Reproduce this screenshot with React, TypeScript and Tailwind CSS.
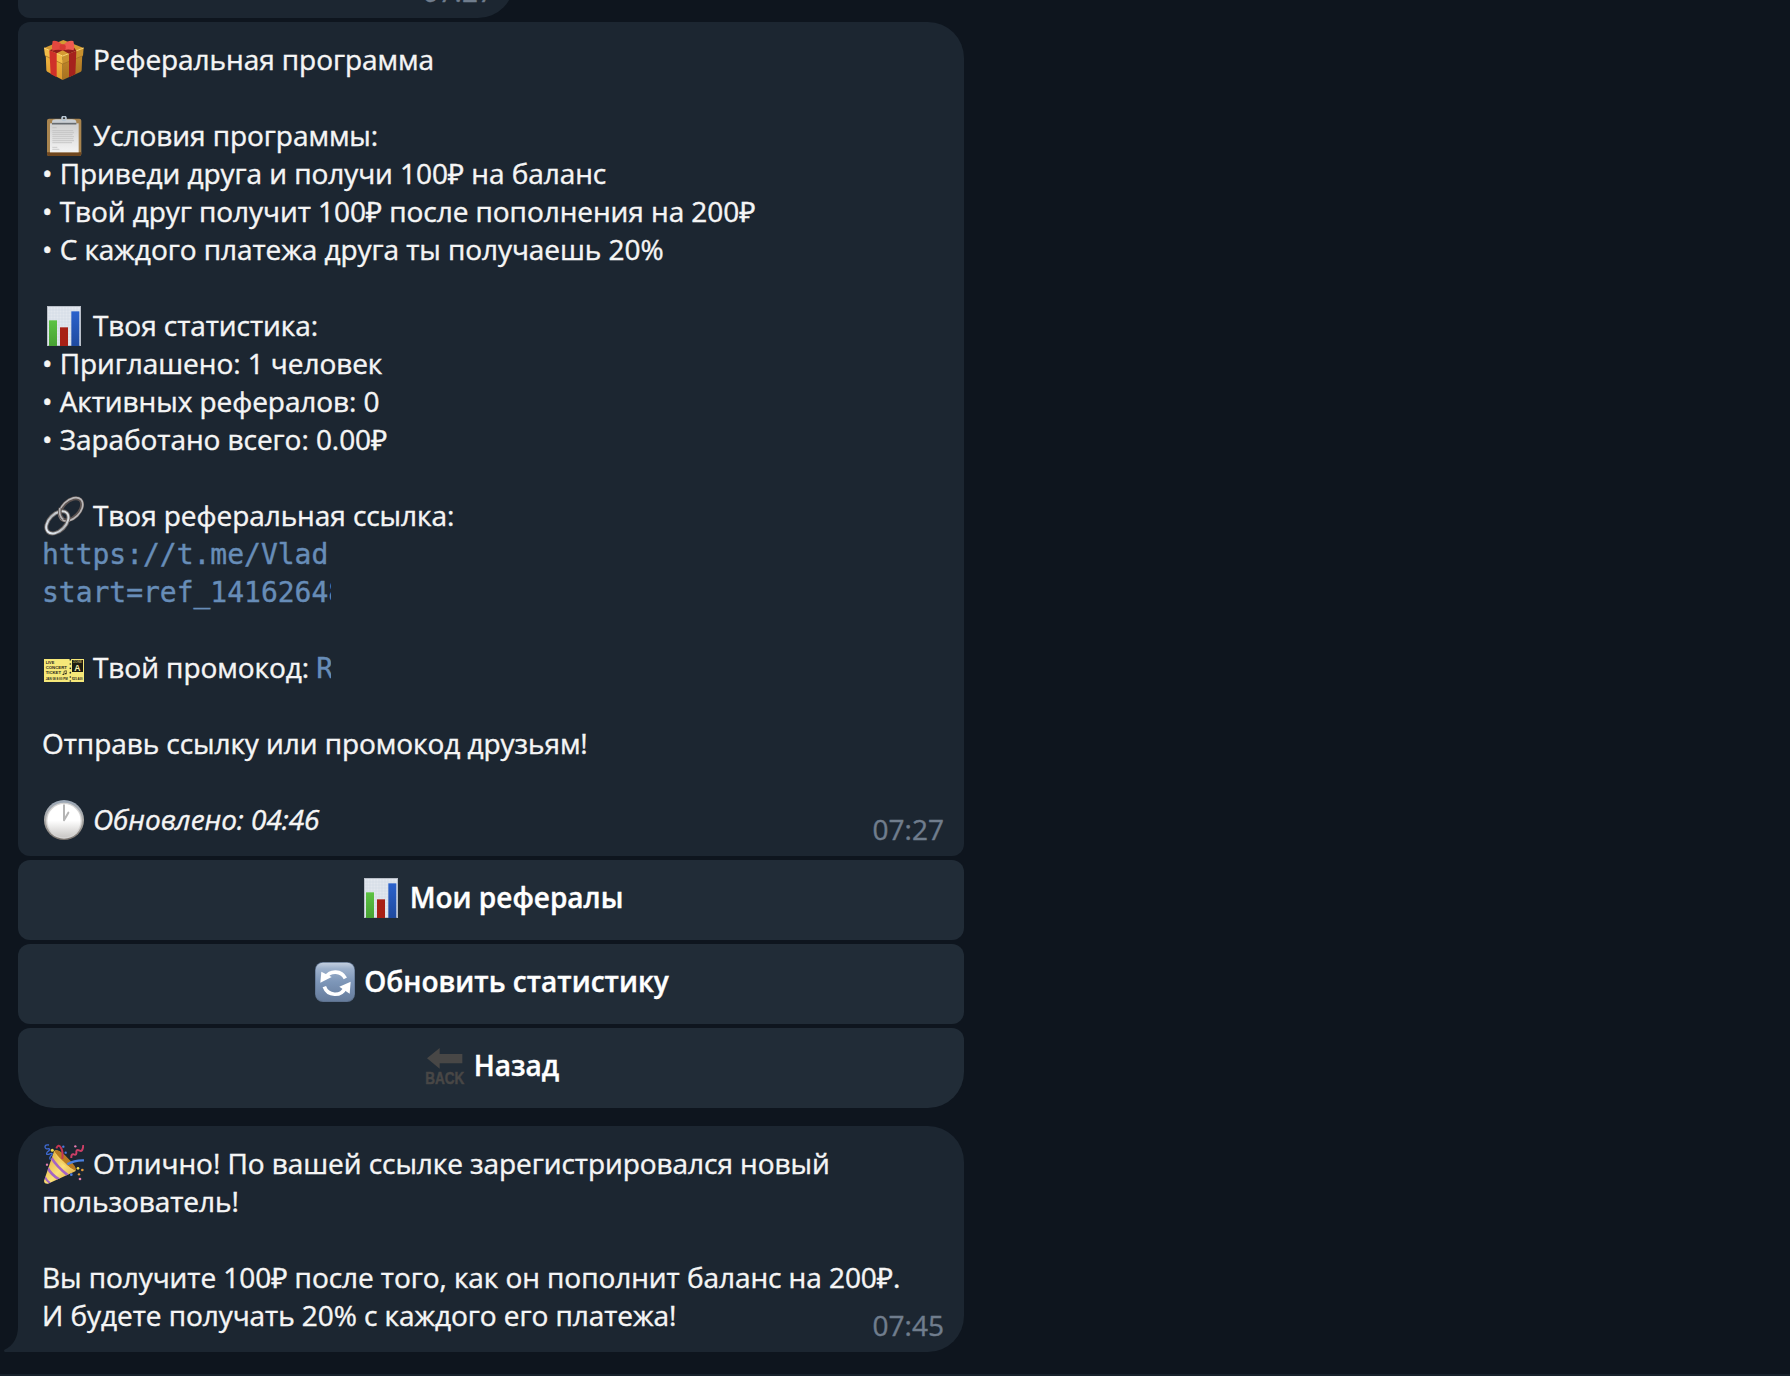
import type { ReactNode } from "react";

function Emoji({ children }: { children: ReactNode }) {
  return (
    <svg viewBox="0 0 120 120" className="ml-0.5 mr-[9px] h-10 w-10 shrink-0 overflow-hidden [-webkit-text-stroke:0px]">
      {children}
    </svg>
  );
}

function Gift() {
  return (
    <Emoji>
      <defs>
        <linearGradient id="giftLeft" x1="0" y1="0" x2="0" y2="1">
          <stop offset="0" stopColor="#f0b844" />
          <stop offset="1" stopColor="#dd9a2b" />
        </linearGradient>
        <linearGradient id="giftRight" x1="0" y1="0" x2="0" y2="1">
          <stop offset="0" stopColor="#c38a2c" />
          <stop offset="1" stopColor="#a8721f" />
        </linearGradient>
      </defs>
      <path d="M5 38 L56 60 V120 L10 95 Q7 93 7 90 Z" fill="url(#giftLeft)" />
      <path d="M56 60 L115 38 L113 90 Q113 94 109 96 L56 120 Z" fill="url(#giftRight)" />
      <path d="M0 24 L58 0 L119 24 L56 48 Z" fill="#d49a33" />
      <path d="M0 24 L56 48 V72 L3 47 Z" fill="#f2bc48" />
      <path d="M56 48 L119 24 L117 47 L56 72 Z" fill="#c8912f" />
      <path d="M3 47 L56 72 L117 47" fill="none" stroke="#9b6b20" strokeWidth="2" />
      <path d="M0 24 L56 48 L119 24" fill="none" stroke="#ffd873" strokeWidth="3" />
      <path d="M16 31 L38 40 V112 L20 102 Z" fill="#cf3029" />
      <path d="M75 41 L97 32 L94 103 L75 112 Z" fill="#a5221d" />
      <path d="M16 31 L80 8 L97 32 L75 41 L56 31 L38 40 Z" fill="#8f1d1b" />
      <path d="M26 3 Q40 0 55 15 L53 30 Q38 28 25 32 Q22 18 26 3Z" fill="#e2473f" />
      <path d="M88 3 Q72 -1 58 15 L61 30 Q74 27 89 31 Q92 16 88 3Z" fill="#ef5a50" />
      <rect x="47" y="13" width="18" height="18" rx="6" fill="#d63932" />
    </Emoji>
  );
}

function Clipboard() {
  return (
    <Emoji>
      <defs>
        <linearGradient id="paper" x1="0" y1="0" x2="0" y2="1">
          <stop offset="0" stopColor="#cfcfcf" />
          <stop offset="1" stopColor="#f4f4f4" />
        </linearGradient>
      </defs>
      <rect x="9" y="8" width="103" height="112" rx="6" fill="#a8844f" />
      <path d="M9 109 H112 V114 Q112 120 106 120 H15 Q9 120 9 114Z" fill="#70471f" />
      <rect x="18" y="22" width="86" height="87" fill="url(#paper)" />
      <g stroke="#b9b9b9" strokeWidth="2">
        <path d="M25 35H38M25 44H88M25 50H90M25 56H86M25 62H90M25 68H88M25 74H90M25 80H84M25 94H40M25 100H46" />
      </g>
      <path d="M24 22 V17 Q25 10 36 10 H84 Q95 10 97 17 V22Z" fill="#c9ced3" />
      <path d="M24 23H97" stroke="#666b70" strokeWidth="5" />
      <circle cx="60" cy="7" r="6" fill="none" stroke="#b9c6d2" strokeWidth="5" />
    </Emoji>
  );
}

function Chart() {
  return (
    <Emoji>
      <defs>
        <linearGradient id="barGreen" x1="0" y1="0" x2="0" y2="1">
          <stop offset="0" stopColor="#5cc343" />
          <stop offset="1" stopColor="#48a134" />
        </linearGradient>
        <linearGradient id="barBlue" x1="0" y1="0" x2="0" y2="1">
          <stop offset="0" stopColor="#2b62cc" />
          <stop offset="1" stopColor="#1f4a9f" />
        </linearGradient>
      </defs>
      <rect x="9" y="0" width="102" height="120" fill="#e2e7ee" />
      <path
        d="M18 0V120M27 0V120M36 0V120M45 0V120M54 0V120M63 0V120M72 0V120M81 0V120M90 0V120M99 0V120M9 12H111M9 21H111M9 30H111M9 39H111M9 48H111M9 57H111M9 66H111M9 75H111M9 84H111M9 93H111M9 102H111M9 111H111"
        stroke="#ccd5e0"
        strokeWidth="1.5"
      />
      <rect x="10.500" y="1.500" width="99" height="117" fill="none" stroke="#b9bfc8" strokeWidth="3" />
      <rect x="15" y="43" width="24" height="77" fill="url(#barGreen)" />
      <rect x="48" y="64" width="24" height="56" fill="#a82015" />
      <rect x="82" y="16" width="24" height="104" fill="url(#barBlue)" />
    </Emoji>
  );
}

function Chain() {
  return (
    <Emoji>
      <defs>
        <linearGradient id="steel" x1="0" y1="0" x2="1" y2="0">
          <stop offset="0" stopColor="#e3ebf3" />
          <stop offset="0.5" stopColor="#b4babf" />
          <stop offset="1" stopColor="#dfe3e6" />
        </linearGradient>
      </defs>
      <g fill="none">
        <g transform="rotate(-45 81 40)">
          <ellipse cx="81" cy="40" rx="40" ry="25" stroke="#5b5250" strokeWidth="12" />
          <ellipse cx="81" cy="40" rx="42" ry="27" stroke="#b9b7b8" strokeWidth="5" />
        </g>
        <g transform="rotate(-45 40 79)">
          <ellipse cx="40" cy="79" rx="40" ry="25" stroke="#6b6462" strokeWidth="12" />
          <ellipse cx="40" cy="79" rx="40" ry="25" stroke="url(#steel)" strokeWidth="6" />
        </g>
        <path d="M49 36 Q43 58 58 70" stroke="#5b5250" strokeWidth="11" />
        <path d="M48 36 Q43 59 58 71" stroke="#b5b4b6" strokeWidth="5" />
      </g>
    </Emoji>
  );
}

function Ticket() {
  return (
    <Emoji>
      <rect x="0" y="33" width="120" height="69" fill="#f6e879" />
      <rect x="84" y="36" width="33" height="36" fill="#1d1b12" />
      <g fontFamily="Liberation Sans" fontWeight="700" fill="#28251a" letterSpacing="0">
        <text x="5" y="48" fontSize="12.500" textLength="26" lengthAdjust="spacingAndGlyphs">LIVE</text>
        <text x="5" y="63" fontSize="12.500" textLength="64" lengthAdjust="spacingAndGlyphs">CONCERT</text>
        <text x="5" y="79" fontSize="12.500" textLength="46" lengthAdjust="spacingAndGlyphs">TICKET</text>
        <text x="5" y="96" fontSize="8" textLength="66" lengthAdjust="spacingAndGlyphs">JAN 08  8:00 PM</text>
        <text x="84" y="96" fontSize="8" textLength="32" lengthAdjust="spacingAndGlyphs">$25 A00</text>
        <text x="100.500" y="69" fontSize="26" textAnchor="middle" fill="#fbf3b0">A</text>
        <text x="87" y="46" fontSize="9" textLength="27" lengthAdjust="spacingAndGlyphs" fill="#a99e54">ZONE</text>
      </g>
      <path d="M60 79 V70 L67 68 V77" fill="none" stroke="#28251a" strokeWidth="2" />
      <ellipse cx="58" cy="79" rx="3" ry="2" fill="#28251a" />
      <ellipse cx="65" cy="77" rx="3" ry="2" fill="#28251a" />
      <g fill="#1c2631">
        <circle cx="79" cy="35" r="2.500" />
        <circle cx="79" cy="48" r="2.500" />
        <circle cx="79" cy="61" r="2.500" />
        <circle cx="79" cy="74" r="2.500" />
        <circle cx="79" cy="87" r="2.500" />
        <circle cx="79" cy="99" r="2.500" />
      </g>
    </Emoji>
  );
}

function Clock() {
  return (
    <Emoji>
      <defs>
        <linearGradient id="clockRim" x1="0" y1="0" x2="0" y2="1">
          <stop offset="0" stopColor="#9aa7b6" />
          <stop offset="0.5" stopColor="#b0aeab" />
          <stop offset="1" stopColor="#77716c" />
        </linearGradient>
        <linearGradient id="clockFace" x1="0" y1="0" x2="0" y2="1">
          <stop offset="0.5" stopColor="#ffffff" />
          <stop offset="1" stopColor="#c9c7c5" />
        </linearGradient>
      </defs>
      <circle cx="60" cy="60" r="60" fill="url(#clockRim)" />
      <circle cx="60" cy="62" r="54" fill="#d4d3d2" />
      <circle cx="60" cy="62" r="50" fill="url(#clockFace)" />
      <path d="M60 16 V61 L73 38" fill="none" stroke="#b5b5b5" strokeWidth="6" strokeLinecap="round" strokeLinejoin="round" />
    </Emoji>
  );
}

function Refresh() {
  return (
    <Emoji>
      <defs>
        <linearGradient id="keyBlue" x1="0" y1="0" x2="0" y2="1">
          <stop offset="0" stopColor="#c3cfdf" />
          <stop offset="0.16" stopColor="#9cb0cb" />
          <stop offset="0.5" stopColor="#7d96b8" />
          <stop offset="1" stopColor="#667c9c" />
        </linearGradient>
      </defs>
      <rect width="120" height="120" rx="24" fill="#5e728e" />
      <rect x="2" y="2" width="116" height="115" rx="22" fill="url(#keyBlue)" />
      <g fill="none" stroke="#fff" strokeWidth="11">
        <path d="M32 46 A34 34 0 0 1 91 49" />
        <path d="M91 77 A34 34 0 0 1 28 74" />
      </g>
      <path d="M19 29 L50 45 L16 62 Z" fill="#fff" />
      <path d="M107 59 L104 95 L73 74 Z" fill="#fff" />
    </Emoji>
  );
}

function Back() {
  return (
    <Emoji>
      <path d="M6 37 L44 6 V24 H112 V52 H44 V68 Z" fill="#484746" />
      <text x="1" y="114" fontFamily="Liberation Sans" fontWeight="700" fontSize="52" textLength="117" lengthAdjust="spacingAndGlyphs" fill="#484746" stroke="#484746" strokeWidth="1.5">
        BACK
      </text>
    </Emoji>
  );
}

function Party() {
  return (
    <Emoji>
      <defs>
        <linearGradient id="cone" x1="0" y1="0.3" x2="0.8" y2="1">
          <stop offset="0" stopColor="#e0ab3a" />
          <stop offset="0.5" stopColor="#fbe07a" />
          <stop offset="1" stopColor="#d79a31" />
        </linearGradient>
        <clipPath id="coneShape">
          <path d="M30 22 L0 110 Q0 120 12 119 L94 82 Q99 74 80 56 L50 24 Q36 14 30 22Z" />
        </clipPath>
      </defs>
      <g clipPath="url(#coneShape)">
        <rect width="120" height="120" fill="url(#cone)" />
        <path d="M22 41 Q38 68 72 94" fill="none" stroke="#a464c4" strokeWidth="8" />
        <path d="M10 70 Q22 93 48 108" fill="none" stroke="#a464c4" strokeWidth="8" />
        <path d="M2 98 Q8 112 22 120" fill="none" stroke="#a464c4" strokeWidth="6" />
      </g>
      <path d="M31 20 Q45 14 71 42 Q100 70 95 79 Q84 80 57 52 Q34 30 31 20Z" fill="#b97b22" />
      <path d="M31 20 Q38 46 61 62 Q84 82 95 79 Q84 80 57 52 Q34 30 31 20Z" fill="#f4cf62" />
      <path d="M70 61 Q91 48 120 49" fill="none" stroke="#4a80de" strokeWidth="7" />
      <path d="M55 45 Q58 20 50 10 Q43 -1 37 13" fill="none" stroke="#c43653" strokeWidth="6" />
      <path d="M82 42 Q81 29 89 31 Q99 35 97 22 Q98 15 107 20 Q116 25 118 3" fill="none" stroke="#cc3f66" strokeWidth="6" />
      <path d="M15 3 Q3 1 3 9 Q4 16 14 14 Q22 16 10 24 Q4 33 14 31 Q27 25 24 32 Q13 43 20 47" fill="none" stroke="#3e6ad2" strokeWidth="4" />
      <g fill="#f3dc4d">
        <circle cx="25" cy="19" r="4.500" />
        <circle cx="102" cy="73" r="4" />
      </g>
      <g fill="#4b7ce0">
        <circle cx="58" cy="8" r="3.500" />
        <circle cx="65" cy="26" r="3.500" />
        <circle cx="82" cy="92" r="4" />
      </g>
      <g fill="#e57db0">
        <circle cx="94" cy="7" r="3.500" />
        <circle cx="9" cy="62" r="3.500" />
        <circle cx="108" cy="105" r="4" />
      </g>
      <g fill="#e09a38">
        <circle cx="105" cy="91" r="3.500" />
        <circle cx="115" cy="78" r="4" />
      </g>
    </Emoji>
  );
}

function Line({ icon, children }: { icon?: ReactNode; children?: ReactNode }) {
  return (
    <div className="flex h-[38px] items-start whitespace-pre">
      {icon}
      <span>{children}</span>
    </div>
  );
}

function Code({ children }: { children: ReactNode }) {
  return (
    <span className="font-['DejaVu_Sans_Mono',monospace] text-[28px] tracking-[-0.02px] text-[#678db8]">{children}</span>
  );
}

function Time({ children }: { children: ReactNode }) {
  return (
    <span className="absolute right-[20px] bottom-[8px] leading-[38px] tracking-normal text-[#707d8d]">{children}</span>
  );
}

function KeyboardButton({ icon, label, last }: { icon: ReactNode; label: string; last?: boolean }) {
  return (
    <button
      className={
        "flex h-20 w-full items-start justify-center bg-[#212c37] pt-[18px] font-semibold tracking-normal text-white " +
        (last ? "rounded-t-[12px] rounded-b-[36px]" : "rounded-[12px]")
      }
    >
      {icon}
      <span>{label}</span>
    </button>
  );
}

export default function App() {
  return (
    <div className="flex h-[1376px] w-[1790px] flex-col overflow-hidden bg-[#0e151e] font-['Open_Sans','Noto_Sans',sans-serif] text-[28px] leading-[38px] tracking-[-0.065px] text-[#f5f5f5] [-webkit-text-stroke:0.4px]">
      <main className="ml-[18px] flex h-[1374px] w-[946px] shrink-0 flex-col">
        <div className="relative h-[18px] w-[496px] shrink-0">
          <div className="absolute bottom-0 h-[90px] w-full rounded-br-[36px] rounded-bl-[12px] bg-[#1c2631]">
            <Time>07:27</Time>
          </div>
        </div>

        <section className="relative mt-1 h-[834px] shrink-0 rounded-[12px] rounded-tr-[36px] bg-[#1c2631] py-[18px] pl-6">
          <Line icon={<Gift />}>Реферальная программа</Line>
          <Line />
          <Line icon={<Clipboard />}>Условия программы:</Line>
          <Line>• Приведи друга и получи 100₽ на баланс</Line>
          <Line>• Твой друг получит 100₽ после пополнения на 200₽</Line>
          <Line>• С каждого платежа друга ты получаешь 20%</Line>
          <Line />
          <Line icon={<Chart />}>Твоя статистика:</Line>
          <Line>• Приглашено: 1 человек</Line>
          <Line>• Активных рефералов: 0</Line>
          <Line>• Заработано всего: 0.00₽</Line>
          <Line />
          <Line icon={<Chain />}>Твоя реферальная ссылка:</Line>
          <div className="w-[289px] overflow-hidden">
            <Line>
              <Code>https://t.me/Vlad</Code>
            </Line>
            <Line>
              <Code>start=ref_14162648</Code>
            </Line>
            <Line />
            <Line icon={<Ticket />}>
              Твой промокод: <Code>R</Code>
            </Line>
          </div>
          <Line />
          <Line>Отправь ссылку или промокод друзьям!</Line>
          <Line />
          <Line icon={<Clock />}>
            <i>Обновлено: 04:46</i>
          </Line>
          <Time>07:27</Time>
        </section>

        <div className="mt-1 flex shrink-0 flex-col gap-1">
          <KeyboardButton icon={<Chart />} label="Мои рефералы" />
          <KeyboardButton icon={<Refresh />} label="Обновить статистику" />
          <KeyboardButton icon={<Back />} label="Назад" last />
        </div>

        <section className="relative mt-[18px] h-[226px] shrink-0 rounded-[36px] rounded-bl-none bg-[#1c2631] py-[18px] pl-6">
          <Line icon={<Party />}>Отлично! По вашей ссылке зарегистрировался новый</Line>
          <Line>пользователь!</Line>
          <Line />
          <Line>Вы получите 100₽ после того, как он пополнит баланс на 200₽.</Line>
          <Line>И будете получать 20% с каждого его платежа!</Line>
          <Time>07:45</Time>
          <svg viewBox="0 0 15 26" className="absolute bottom-0 -left-[14px] h-[26px] w-[15px]">
            <path d="M15 26 H1 Q-1 24.500 1 23.500 Q14 17 14 0 H15 Z" fill="#1c2631" />
          </svg>
        </section>
      </main>
      <div className="h-0.5 w-full shrink-0 bg-[#18222c]" />
    </div>
  );
}
